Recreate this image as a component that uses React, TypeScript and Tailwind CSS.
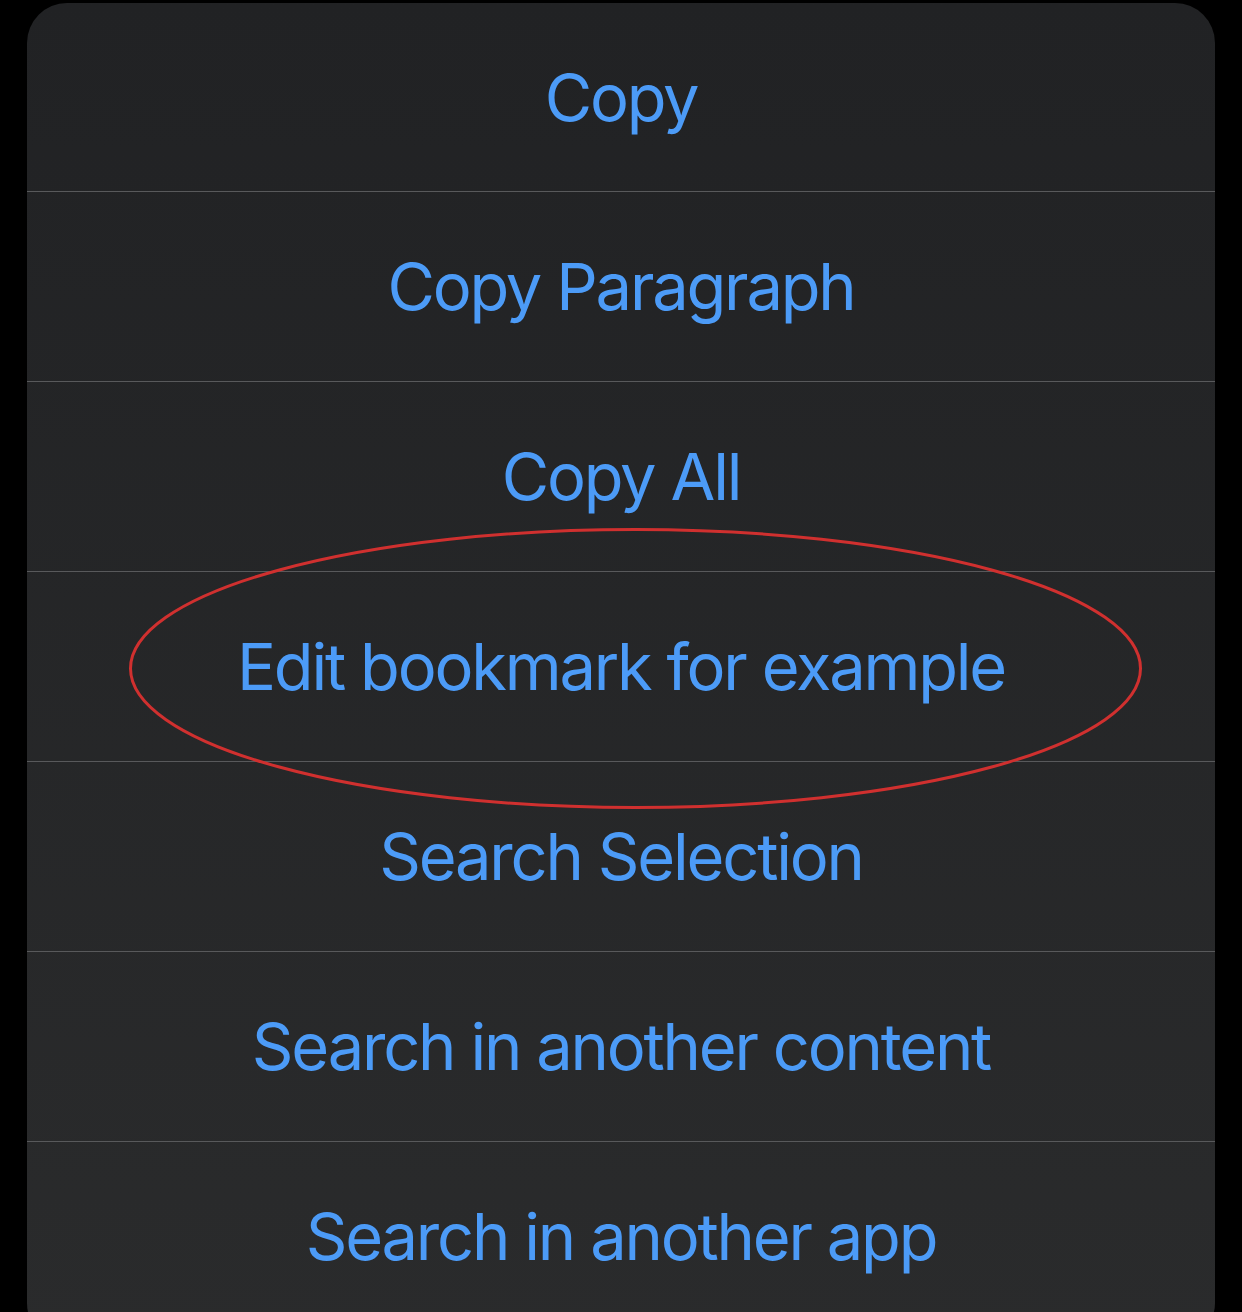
const items = [
  "Copy",
  "Copy Paragraph",
  "Copy All",
  "Edit bookmark for example",
  "Search Selection",
  "Search in another content",
  "Search in another app",
]

export default function App() {
  return (
    <div className="relative h-[1312px] w-[1242px] overflow-hidden bg-black pl-[27px] pr-[27px] pt-[3px]">
      <div className="h-[1340px] rounded-[40px] bg-gradient-to-b from-[#212224] to-[#2a2b2c]">
        {items.map((label, i) => (
          <div
            key={label}
            className={
              i === 0
                ? "flex h-[188px] items-center justify-center"
                : "flex h-[190px] items-center justify-center border-t border-[#58595b]"
            }
          >
            <span className="font-['Inter',sans-serif] text-[65px] leading-none tracking-[-2.2px] text-[#4c9bf7]">
              {label}
            </span>
          </div>
        ))}
      </div>
      <svg className="absolute left-0 top-0" width="1242" height="1312" viewBox="0 0 1242 1312">
        <ellipse cx="635.5" cy="668.5" rx="505" ry="139" fill="none" stroke="#d0302f" strokeWidth="3" />
      </svg>
    </div>
  )
}
